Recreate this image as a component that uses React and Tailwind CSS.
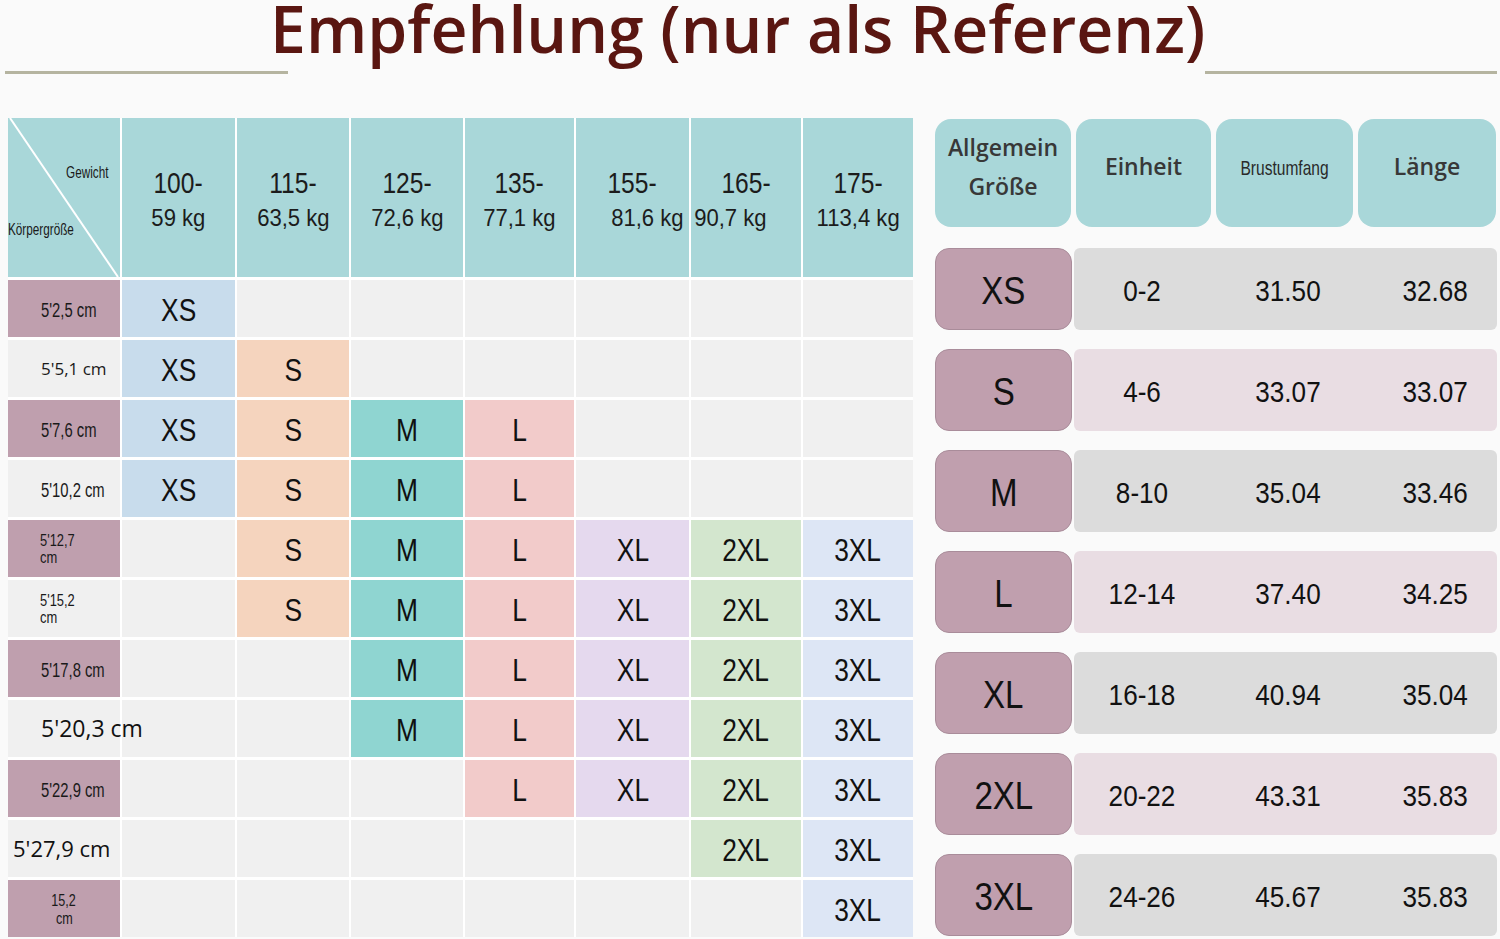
import React from "react";

const SANS = "font-['Liberation_Sans',Arial,sans-serif]";
const OPEN = "font-['Open_Sans',sans-serif]";

const SIZE_BG = {
  XS: "bg-[#c8dcec]",
  S: "bg-[#f5d4be]",
  M: "bg-[#8fd5d1]",
  L: "bg-[#f2cbca]",
  XL: "bg-[#e5d9ee]",
  "2XL": "bg-[#d3e6ce]",
  "3XL": "bg-[#dde6f5]",
};

const weights = [
  ["100-", "59 kg", ""],
  ["115-", "63,5 kg", ""],
  ["125-", "72,6 kg", ""],
  ["135-", "77,1 kg", ""],
  ["155-", "81,6 kg", "pl-[30px]"],
  ["165-", "90,7 kg", "pr-[32px]"],
  ["175-", "113,4 kg", ""],
];

// label kinds: narrow, wide, small, big
const rows = [
  { label: "5'2,5 cm", kind: "narrow", dark: true, sizes: ["XS", 0, 0, 0, 0, 0, 0] },
  { label: "5'5,1 cm", kind: "wide", dark: false, sizes: ["XS", "S", 0, 0, 0, 0, 0] },
  { label: "5'7,6 cm", kind: "narrow", dark: true, sizes: ["XS", "S", "M", "L", 0, 0, 0] },
  { label: "5'10,2 cm", kind: "narrow", dark: false, sizes: ["XS", "S", "M", "L", 0, 0, 0] },
  { label: ["5'12,7", "cm"], kind: "small", dark: true, sizes: [0, "S", "M", "L", "XL", "2XL", "3XL"] },
  { label: ["5'15,2", "cm"], kind: "small", dark: false, sizes: [0, "S", "M", "L", "XL", "2XL", "3XL"] },
  { label: "5'17,8 cm", kind: "narrow", dark: true, sizes: [0, 0, "M", "L", "XL", "2XL", "3XL"] },
  { label: "5'20,3 cm", kind: "big", dark: false, sizes: [0, 0, "M", "L", "XL", "2XL", "3XL"] },
  { label: "5'22,9 cm", kind: "narrow", dark: true, sizes: [0, 0, 0, "L", "XL", "2XL", "3XL"] },
  { label: "5'27,9 cm", kind: "big2", dark: false, sizes: [0, 0, 0, 0, 0, "2XL", "3XL"] },
  { label: ["15,2", "cm"], kind: "center", dark: true, sizes: [0, 0, 0, 0, 0, 0, "3XL"] },
];

const chart = [
  ["XS", "0-2", "31.50", "32.68"],
  ["S", "4-6", "33.07", "33.07"],
  ["M", "8-10", "35.04", "33.46"],
  ["L", "12-14", "37.40", "34.25"],
  ["XL", "16-18", "40.94", "35.04"],
  ["2XL", "20-22", "43.31", "35.83"],
  ["3XL", "24-26", "45.67", "35.83"],
];

function RowLabel({ row }) {
  const bg = row.dark ? "bg-[#bf9fae]" : "bg-[#f0f0f0]";
  if (row.kind === "narrow") {
    return (
      <div className={`${bg} flex items-center pl-[33px] pt-[2px] text-[20px] text-[#1a1a1a] ${SANS}`}>
        <span className="inline-block origin-left scale-x-[0.74] whitespace-nowrap">{row.label}</span>
      </div>
    );
  }
  if (row.kind === "wide") {
    return (
      <div className={`${bg} flex items-center pl-[33px] text-[17px] text-[#1a1a1a] ${OPEN}`}>
        <span className="whitespace-nowrap">{row.label}</span>
      </div>
    );
  }
  if (row.kind === "big" || row.kind === "big2") {
    return (
      <div
        className={`relative z-10 ${bg} flex items-center text-[#111] ${OPEN} ${
          row.kind === "big" ? "pl-[33px] text-[23px]" : "pl-[5px] text-[22px]"
        }`}
      >
        <span className="whitespace-nowrap">{row.label}</span>
      </div>
    );
  }
  if (row.kind === "center") {
    return (
      <div className={`${bg} flex flex-col items-center justify-center pt-[3px] text-[17px] leading-[18px] text-[#1a1a1a] ${SANS}`}>
        <span className="inline-block scale-x-[0.74]">{row.label[0]}</span>
        <span className="inline-block scale-x-[0.74]">{row.label[1]}</span>
      </div>
    );
  }
  // two-line small labels
  return (
    <div className={`${bg} flex flex-col items-start justify-center pl-[32px] text-[17px] leading-[17px] text-[#1a1a1a] ${SANS}`}>
      <span className="inline-block origin-left scale-x-[0.76]">{row.label[0]}</span>
      <span className="inline-block origin-left scale-x-[0.76]">{row.label[1]}</span>
    </div>
  );
}

function SizeTable() {
  return (
    <div className="grid grid-cols-[112px_113px_112px_112px_109px_113px_110px_110px] grid-rows-[159px_repeat(11,57px)] gap-x-[2px] gap-y-[3px] bg-white">
      {/* corner cell */}
      <div className={`relative flex flex-col bg-[#a9d7d9] text-[17px] text-[#1a1a1a] ${SANS}`}>
        <svg className="absolute inset-0" width="112" height="159" viewBox="0 0 112 159">
          <line x1="2" y1="0" x2="110" y2="159" stroke="#ffffff" strokeWidth="2" />
        </svg>
        <div className="flex justify-end pr-[12px] pt-[42px]">
          <span className="inline-block origin-right scale-x-[0.69]">Gewicht</span>
        </div>
        <div className="mt-[31px] flex">
          <span className="inline-block origin-left scale-x-[0.69] whitespace-nowrap">Körpergröße</span>
        </div>
      </div>

      {weights.map(([a, b, shift]) => (
        <div
          key={a}
          className={`flex flex-col items-center justify-center bg-[#a9d7d9] pt-[4px] text-[#1c1c1c] ${SANS}`}
        >
          <span className="inline-block scale-x-[0.82] text-[30px] leading-[35px]">{a}</span>
          <span className={`flex w-full justify-center ${shift}`}>
            <span className="inline-block scale-x-[0.92] whitespace-nowrap text-[24px] leading-[35px]">{b}</span>
          </span>
        </div>
      ))}

      {rows.map((row, i) => (
        <React.Fragment key={i}>
          <RowLabel row={row} />
          {row.sizes.map((s, j) => (
            <div
              key={j}
              className={`flex items-center justify-center pt-[6px] text-[31px] text-[#111] ${SANS} ${
                s ? SIZE_BG[s] : "bg-[#f0f0f0]"
              }`}
            >
              {s ? <span className="inline-block scale-x-[0.85]">{s}</span> : null}
            </div>
          ))}
        </React.Fragment>
      ))}
    </div>
  );
}

function MeasureChart() {
  return (
    <div className="flex w-[562px] flex-col">
      {/* header pills */}
      <div className="grid h-[108px] grid-cols-[136px_135px_137px_138px] gap-x-[5px]">
        <div className={`flex flex-col items-center justify-center rounded-2xl bg-[#a9d7d9] pb-[12px] text-[23px] font-semibold leading-[39px] text-[#383838] ${OPEN}`}>
          <span>Allgemein</span>
          <span>Größe</span>
        </div>
        <div className={`flex items-center justify-center rounded-2xl bg-[#a9d7d9] pb-[14px] text-[23px] font-semibold text-[#383838] ${OPEN}`}>
          Einheit
        </div>
        <div className={`flex items-center justify-center rounded-2xl bg-[#a9d7d9] pb-[10px] text-[21px] text-[#2a2a2a] ${SANS}`}>
          <span className="inline-block scale-x-[0.74]">Brustumfang</span>
        </div>
        <div className={`flex items-center justify-center rounded-2xl bg-[#a9d7d9] pb-[14px] text-[23px] font-semibold text-[#383838] ${OPEN}`}>
          Länge
        </div>
      </div>

      {/* size rows */}
      <div className="mt-[21px] flex flex-col gap-y-[19px]">
        {chart.map(([size, unit, chest, len], i) => (
          <div key={size} className="flex h-[82px] gap-x-[2px]">
            <div
              className={`flex w-[137px] shrink-0 items-center justify-center rounded-[14px] border border-[#a98c9a] bg-[#c09fae] pt-[4px] text-[38px] text-[#111] ${SANS}`}
            >
              <span className="inline-block scale-x-[0.87]">{size}</span>
            </div>
            <div
              className={`grid flex-1 grid-cols-[136px_156px_1fr] items-center rounded-md pt-[6px] text-[29px] text-[#111] ${SANS} ${
                i % 2 === 0 ? "bg-[#dcdcdc]" : "bg-[#e9dde3]"
              }`}
            >
              <span className="inline-block scale-x-[0.9] text-center">{unit}</span>
              <span className="inline-block scale-x-[0.9] text-center">{chest}</span>
              <span className="inline-block scale-x-[0.9] pl-[8px] text-center">{len}</span>
            </div>
          </div>
        ))}
      </div>
    </div>
  );
}

export default function App() {
  return (
    <div className="h-[939px] w-[1500px] overflow-hidden bg-[#fafafa]">
      {/* title */}
      <div className="flex h-[75px] items-start">
        <div className="ml-[5px] mt-[71px] h-[3px] w-[283px] shrink-0 bg-[#b5b4a0]" />
        <h1
          className={`-ml-[18px] whitespace-nowrap text-[64.3px] font-semibold leading-[56px] text-[#5a1611] ${OPEN}`}
        >
          Empfehlung (nur als Referenz)
        </h1>
        <div className="mr-[3px] mt-[71px] h-[3px] flex-1 bg-[#b5b4a0]" />
      </div>

      <div className="ml-[8px] mt-[43px] flex gap-x-[22px]">
        <SizeTable />
        <div className="mt-[1px]">
          <MeasureChart />
        </div>
      </div>
    </div>
  );
}
